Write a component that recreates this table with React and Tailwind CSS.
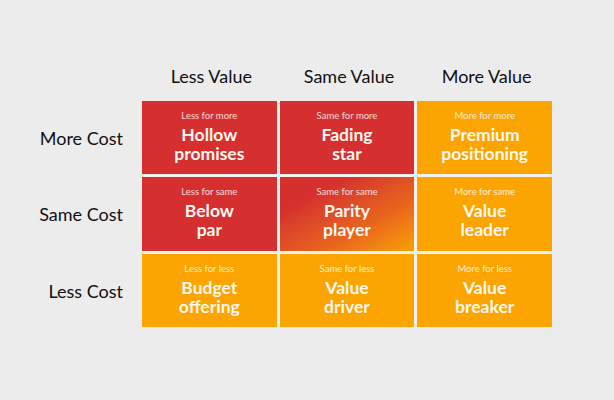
export default function App() {
  const red = "bg-[#d52f2f]";
  const orange = "bg-[#fca400]";
  const cells = [
    { sub: "Less for more", t1: "Hollow", t2: "promises", c: red },
    { sub: "Same for more", t1: "Fading", t2: "star", c: red },
    { sub: "More for more", t1: "Premium", t2: "positioning", c: orange },
    { sub: "Less for same", t1: "Below", t2: "par", c: red },
    { sub: "Same for same", t1: "Parity", t2: "player", c: "bg-linear-to-br from-[#d5302e] from-25% via-[#e8641b] via-65% to-[#f8a000]" },
    { sub: "More for same", t1: "Value", t2: "leader", c: orange },
    { sub: "Less for less", t1: "Budget", t2: "offering", c: orange },
    { sub: "Same for less", t1: "Value", t2: "driver", c: orange },
    { sub: "More for less", t1: "Value", t2: "breaker", c: orange },
  ];
  const rows = ["More Cost", "Same Cost", "Less Cost"];
  const cols = ["Less Value", "Same Value", "More Value"];
  return (
    <div
      className="w-[614px] h-[400px] bg-[#ececec] text-[#111] pt-[63px]"
      style={{ fontFamily: "Lato, 'Noto Sans', sans-serif" }}
    >
      <div className="flex pl-[142px]">
        <div className="grid grid-cols-3 gap-[3px] w-[410px]">
          {cols.map((c) => (
            <div key={c} className="text-center text-[18px] leading-[27px] pl-[4px]">
              {c}
            </div>
          ))}
        </div>
      </div>
      <div className="flex mt-[11px]">
        <div className="w-[142px] pr-[19px] grid grid-rows-3 gap-[3px] h-[226px]">
          {rows.map((r) => (
            <div key={r} className="flex items-center justify-end text-[18px] pt-[2px]">
              {r}
            </div>
          ))}
        </div>
        <div className="w-[410px] h-[226px] grid grid-cols-3 grid-rows-3 gap-[3px] bg-[#f7f2ee]">
          {cells.map((cell, i) => (
            <div
              key={i}
              className={`${cell.c} flex flex-col items-center justify-center text-center text-white pb-[2px]`}
            >
              <div className="text-[9.5px] leading-[12px] text-white/80 mb-[3px]">{cell.sub}</div>
              <div className="text-[17.5px] leading-[19px] font-bold text-[#fff8f0]">{cell.t1}</div>
              <div className="text-[17.5px] leading-[19px] font-bold text-[#fff8f0]">{cell.t2}</div>
            </div>
          ))}
        </div>
      </div>
    </div>
  );
}
